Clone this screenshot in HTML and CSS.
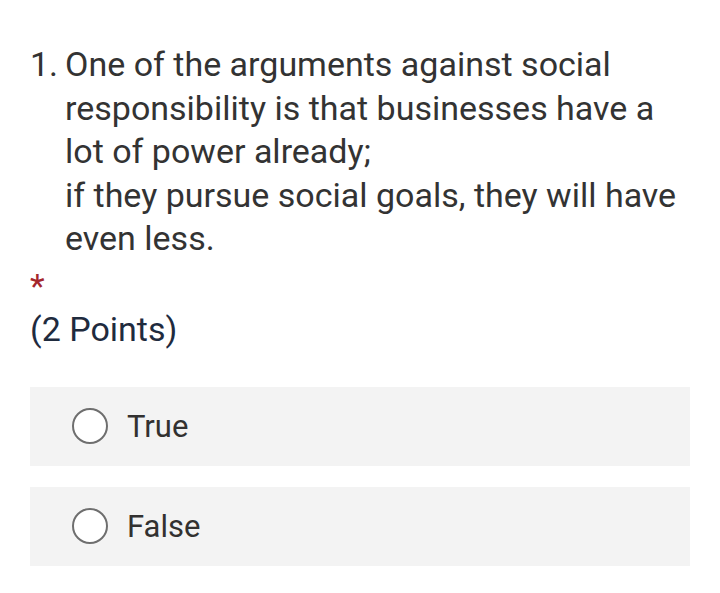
FILE: index.html
```html
<!DOCTYPE html>
<html>
<head>
<meta charset="utf-8">
<link rel="stylesheet" href="styles.css">
</head>
<body>
<div class="question">
  <div class="title">
    <span class="num">1.</span>
    <span class="text">One of the arguments against social responsibility is that businesses have a lot of power already;<br>if they pursue social goals, they will have even less.</span>
  </div>
  <div class="req">*</div>
  <div class="points">(2 Points)</div>
  <div class="options">
    <label class="option"><span class="radio"></span><span class="label">True</span></label>
    <label class="option"><span class="radio"></span><span class="label">False</span></label>
  </div>
</div>
</body>
</html>
```
FILE: styles.css
```css
html, body {
  margin: 0;
  padding: 0;
  background: #ffffff;
}
body {
  font-family: Roboto, "Noto Sans", sans-serif;
  color: #323130;
}
.question {
  padding: 43px 30px 0 30px;
}
.title {
  display: flex;
  font-size: 34px;
  line-height: 43.5px;
  color: #333333;
}
.num {
  width: 35px;
  flex: none;
}
.text {
  flex: 1;
}
.req {
  color: #a4262c;
  font-size: 34px;
  line-height: 43px;
  margin-top: 4px;
}
.points {
  color: #1f2b3e;
  font-size: 34px;
  line-height: 43px;
}
.options {
  margin-top: 36px;
  display: flex;
  flex-direction: column;
  gap: 21px;
}
.option {
  display: flex;
  align-items: center;
  height: 79px;
  background: #f3f3f3;
  padding-left: 42px;
}
.radio {
  width: 32px;
  height: 32px;
  border: 2px solid #6e6e6e;
  border-radius: 50%;
  background: #ffffff;
  flex: none;
}
.label {
  margin-left: 19px;
  font-size: 31px;
  color: #323130;
}
```
